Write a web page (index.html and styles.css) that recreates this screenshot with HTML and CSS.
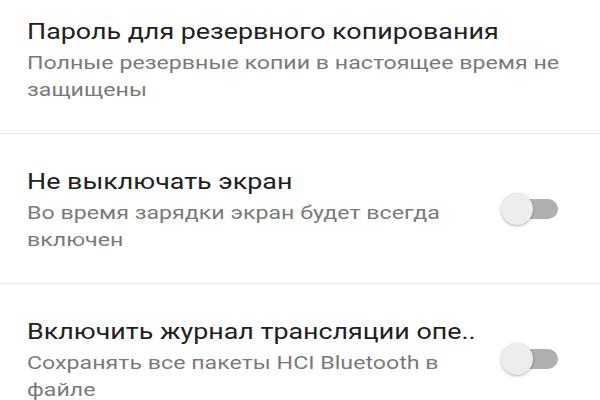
FILE: index.html
```html
<!DOCTYPE html>
<html lang="ru">
<head>
<meta charset="utf-8">
<link rel="stylesheet" href="styles.css">
</head>
<body>
<div class="list">
  <div class="item first">
    <div class="text wide">
      <div class="title">Пароль для резервного копирования</div>
      <div class="summary">Полные резервные копии в настоящее время не защищены</div>
    </div>
  </div>
  <div class="item">
    <div class="text narrow">
      <div class="title">Не выключать экран</div>
      <div class="summary">Во время зарядки экран будет всегда включен</div>
    </div>
    <div class="switch"><div class="track"></div><div class="thumb"></div></div>
  </div>
  <div class="item">
    <div class="text narrow">
      <div class="title">Включить журнал трансляции опе..</div>
      <div class="summary">Сохранять все пакеты HCI Bluetooth в файле</div>
    </div>
    <div class="switch"><div class="track"></div><div class="thumb"></div></div>
  </div>
</div>
</body>
</html>
```
FILE: styles.css
```css
html, body {
  margin: 0;
  padding: 0;
  background: #ffffff;
  font-family: Roboto, "Noto Sans", sans-serif;
  overflow: hidden;
}
.list {
  display: flex;
  flex-direction: column;
}
.item {
  display: flex;
  align-items: center;
  padding: 34px 42px 30px 27px;
  border-bottom: 1px solid #e6e6e6;
}
.item.first {
  padding-top: 18px;
  padding-bottom: 30px;
}
.text {
  display: flex;
  flex-direction: column;
  gap: 3px;
  transform: scaleX(1.22);
  transform-origin: left center;
}
.text.wide {
  flex: 0 0 470px;
}
.text.narrow {
  flex: 0 0 380px;
}
.title {
  font-size: 22px;
  line-height: 28px;
  color: #212121;
  white-space: nowrap;
}
.summary {
  font-size: 19px;
  line-height: 27px;
  color: #7a7a7a;
}
.switch {
  position: relative;
  margin-left: auto;
  margin-bottom: 4px;
  width: 57px;
  height: 32px;
  display: flex;
  align-items: center;
}
.track {
  margin-left: 6px;
  width: 51px;
  height: 20px;
  border-radius: 10px;
  background: #b0b0b0;
}
.thumb {
  position: absolute;
  left: 0;
  top: 0;
  width: 32px;
  height: 32px;
  border-radius: 50%;
  background: #ededed;
  box-shadow: 0 1px 3px rgba(0, 0, 0, 0.3);
}
```
